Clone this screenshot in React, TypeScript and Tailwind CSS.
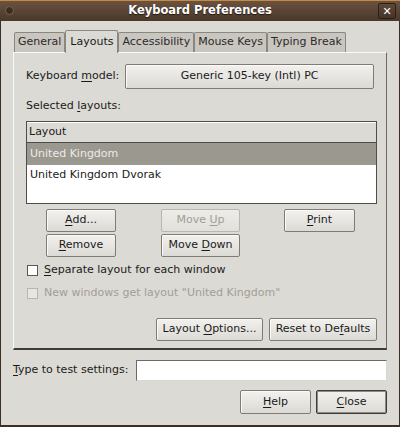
import React from 'react'

const font = { fontFamily: '"DejaVu Sans", "Liberation Sans", sans-serif' }

function U({ children }: { children: React.ReactNode }) {
	return <span className="underline underline-offset-2">{children}</span>
}

function Btn({
	children,
	w,
	disabled,
	main,
}: {
	children: React.ReactNode
	w: string
	disabled?: boolean
	main?: boolean
}) {
	return (
		<div
			className={`${w} h-[23px] flex items-center justify-center rounded-[2px] border text-[11px] whitespace-nowrap ${
				disabled
					? 'border-[#b9b6ae] text-[#a19e97] bg-gradient-to-b from-[#eeece8] to-[#e2e0db]'
					: main
					? 'border-[#3c3b37] text-[#1a1a1a] bg-gradient-to-b from-[#f2f1ee] to-[#dcdad5] shadow-[inset_0_0_0_1px_#8f8c85]'
					: 'border-[#7f7c75] text-[#1a1a1a] bg-gradient-to-b from-[#f2f1ee] to-[#dcdad5] shadow-[inset_1px_1px_0_#fbfaf9]'
			}`}
		>
			<span>{children}</span>
		</div>
	)
}

function Tab({ label, active }: { label: string; active?: boolean }) {
	return (
		<div
			className={`flex items-center px-[3px] border border-b-0 rounded-t-[2px] text-[11px] whitespace-nowrap ${
				active
					? 'h-[23px] px-[4px] bg-[#dcdad5] border-[#8a877f] relative z-10 mb-[-1px] text-[#1a1a1a]'
					: 'h-[20px] bg-[#c9c6c0] border-[#8a877f] text-[#2b2b2b]'
			}`}
		>
			{label}
		</div>
	)
}

export default function App() {
	return (
		<div
			style={font}
			className="w-[400px] h-[427px] bg-[#3d2f25] flex flex-col overflow-hidden text-[#1a1a1a] text-[11px] whitespace-nowrap"
		>
			{/* title bar */}
			<div className="h-[21px] shrink-0 relative flex items-center justify-center bg-gradient-to-b from-[#6a5241] to-[#4a3829] border-t border-[#c88a3c]">
				<div className="absolute left-[5px] top-[5px] w-[9px] h-[9px] rounded-full bg-[#3a2c22] border border-[#7c6452]" />
				<span className="text-white font-bold text-[11.5px] [text-shadow:0_1px_1px_#1e150f]">
					Keyboard Preferences
				</span>
				<div className="absolute right-[4px] top-[2px] w-[18px] h-[16px] rounded-[2px] border border-[#2a1f17] bg-gradient-to-b from-[#5e4838] to-[#45342a] flex items-center justify-center text-white text-[11px] font-bold leading-none">
					✕
				</div>
			</div>

			{/* body */}
			<div className="flex-1 mx-[1px] mb-[2px] bg-[#dcdad5] flex flex-col px-[12px] pt-[9px]">
				{/* tabs */}
				<div className="flex items-end pl-[1px] h-[22px]">
					<Tab label="General" />
					<Tab label="Layouts" active />
					<Tab label="Accessibility" />
					<Tab label="Mouse Keys" />
					<Tab label="Typing Break" />
				</div>

				{/* notebook panel */}
				<div className="h-[298px] border border-[#8a877f] border-t-[#fbfaf9] border-l-[#fbfaf9] border-r-[#6d6a63] border-b-[#3d3c38] border-b-2 flex flex-col px-[12px] pt-[11px]">
					<div className="flex items-center h-[25px]">
						<span className="w-[100px]">
							Keyboard <U>m</U>odel:
						</span>
						<Btn w="w-[251px] h-[25px]">Generic 105-key (Intl) PC</Btn>
					</div>

					<div className="mt-[9px] h-[15px] leading-[15px]">
						Selected <U>l</U>ayouts:
					</div>

					<div className="mt-[8px] w-[351px] h-[83px] border border-[#4e4c47] bg-white flex flex-col">
						<div className="h-[21px] bg-[#dcdad5] border-b border-[#4e4c47] border-t border-t-white flex items-center pl-[2px]">
							Layout
						</div>
						<div className="h-[22px] bg-[#9b9890] text-[#ecebe8] flex items-center pl-[3px]">
							United Kingdom
						</div>
						<div className="h-[21px] flex items-center pl-[3px]">
							United Kingdom Dvorak
						</div>
					</div>

					<div className="mt-[5px] flex">
						<div className="ml-[20px] flex flex-col gap-[2px]">
							<Btn w="w-[70px]">
								<U>A</U>dd...
							</Btn>
							<Btn w="w-[70px]">
								<U>R</U>emove
							</Btn>
						</div>
						<div className="ml-[45px] flex flex-col gap-[2px]">
							<Btn w="w-[79px]" disabled>
								Move <U>U</U>p
							</Btn>
							<Btn w="w-[79px]">
								Move <U>D</U>own
							</Btn>
						</div>
						<div className="ml-[44px]">
							<Btn w="w-[71px]">
								<U>P</U>rint
							</Btn>
						</div>
					</div>

					<div className="mt-[5px] flex items-center h-[16px]">
						<div className="w-[11px] h-[11px] border border-[#5a5954] bg-white ml-[1px] mr-[6px]" />
						<span>
							<U>S</U>eparate layout for each window
						</span>
					</div>
					<div className="mt-[7px] flex items-center h-[16px] text-[#a19e97]">
						<div className="w-[11px] h-[11px] border border-[#b9b6ae] bg-[#e8e6e2] ml-[1px] mr-[6px]" />
						<span>New windows get layout "United Kingdom"</span>
					</div>

					<div className="mt-[17px] flex justify-end gap-[6px] w-[351px]">
						<Btn w="w-[107px] h-[22px]">
							Layout <U>O</U>ptions...
						</Btn>
						<Btn w="w-[108px] h-[22px]">
							Reset to De<U>f</U>aults
						</Btn>
					</div>
				</div>

				{/* test field */}
				<div className="mt-[10px] flex items-center h-[21px]">
					<span className="w-[123px]">
						<U>T</U>ype to test settings:
					</span>
					<div className="flex-1 h-[21px] bg-white border border-[#6d6a63] border-r-[#d8d6d1] border-b-[#d8d6d1]" />
				</div>

				{/* dialog buttons */}
				<div className="mt-[9px] flex justify-end gap-[5px]">
					<Btn w="w-[71px] h-[24px]">
						<U>H</U>elp
					</Btn>
					<Btn w="w-[71px] h-[24px]" main>
						<U>C</U>lose
					</Btn>
				</div>
			</div>
		</div>
	)
}
